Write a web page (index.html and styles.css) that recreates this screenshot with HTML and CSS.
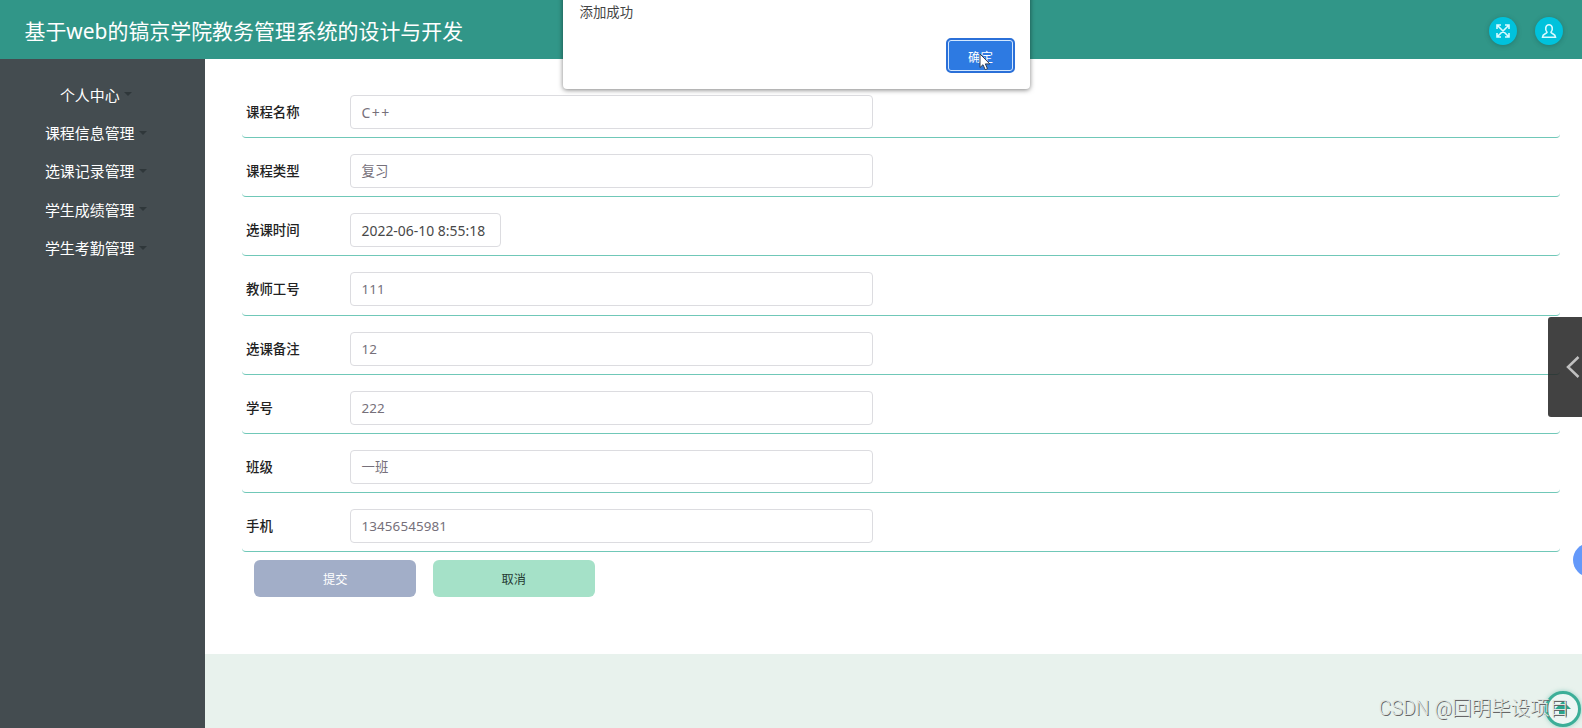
FILE: index.html
```html
<!DOCTYPE html>
<html lang="zh-CN">
<head>
<meta charset="utf-8">
<title>教务管理系统</title>
<link rel="stylesheet" href="styles.css">
</head>
<body>
<header class="header">
  <h1 class="title">基于web的镐京学院教务管理系统的设计与开发</h1>
  <div class="tools">
    <span class="tool"><svg width="14" height="14" viewBox="0 0 14 14" fill="none" stroke="currentColor" stroke-width="1.6"><path d="M1 5V1h4M9 1h4v4M13 9v4H9M5 13H1V9M1.500 1.500l11 11M12.500 1.500l-11 11"/></svg></span>
    <span class="tool"><svg width="16" height="16" viewBox="0 0 16 16" fill="none" stroke="currentColor" stroke-width="1.600"><path d="M6 9.200C3.800 7 4.300 1.700 8 1.700S12.200 7 10 9.200C10.500 11 14.500 10.700 14.500 14.200H1.500C1.500 10.700 5.500 11 6 9.200Z"/></svg></span>
  </div>
</header>
<div class="layout">
  <nav class="sidebar">
    <a class="nav-item">个人中心<i class="caret"></i></a>
    <a class="nav-item">课程信息管理<i class="caret"></i></a>
    <a class="nav-item">选课记录管理<i class="caret"></i></a>
    <a class="nav-item">学生成绩管理<i class="caret"></i></a>
    <a class="nav-item">学生考勤管理<i class="caret"></i></a>
  </nav>
  <main class="main">
    <form class="form">
      <div class="row"><label class="label">课程名称</label><div class="field wide-text">C++</div></div>
      <div class="row"><label class="label">课程类型</label><div class="field">复习</div></div>
      <div class="row"><label class="label">选课时间</label><div class="field date">2022-06-10 8:55:18</div></div>
      <div class="row"><label class="label">教师工号</label><div class="field">111</div></div>
      <div class="row"><label class="label">选课备注</label><div class="field">12</div></div>
      <div class="row"><label class="label">学号</label><div class="field">222</div></div>
      <div class="row"><label class="label">班级</label><div class="field">一班</div></div>
      <div class="row"><label class="label">手机</label><div class="field">13456545981</div></div>
      <div class="actions">
        <button type="button" class="btn submit">提交</button>
        <button type="button" class="btn cancel">取消</button>
      </div>
    </form>
  </main>
</div>
<div class="dialog">
  <p class="message">添加成功</p>
  <button type="button" class="confirm">确定</button>
  <svg class="cursor" width="12" height="18" viewBox="0 0 12 18"><path d="M1 1v13.500l3-2.800 2.200 5 2.300-1-2.200-4.800h4.500Z" fill="#fff" stroke="#333c50" stroke-width="1"/></svg>
</div>
<div class="drawer"><svg width="14" height="22" viewBox="0 0 14 22" fill="none" stroke="#c0c0c0" stroke-width="2.500"><path d="M12.500 1 2 11l10.500 10"/></svg></div>
<div class="bubble"></div>
<div class="totop"><svg width="18" height="18" viewBox="0 0 18 18"><path d="M9 1l8 8h-4v7H5V9H1Z" fill="#2ba58c"/></svg></div>
<div class="watermark">CSDN @回明毕设项目</div>
</body>
</html>
```
FILE: styles.css
```css
* { box-sizing: border-box; }
body {
  margin: 0;
  height: 728px;
  overflow: hidden;
  position: relative;
  display: flex;
  flex-direction: column;
  font-family: "Noto Sans", "Noto Sans CJK SC", sans-serif;
  font-size: 13.400px;
  background: #e8f2ed;
}
.header {
  height: 58.500px;
  flex: none;
  display: flex;
  align-items: center;
  justify-content: space-between;
  padding: 3px 19px 0 24.500px;
  background: #319688;
  color: #fff;
}
.title { margin: 0; font-size: 20.930px; font-weight: 400; line-height: 30px; white-space: nowrap; }
.tools { display: flex; gap: 18px; }
.tool {
  width: 28px;
  height: 28px;
  border-radius: 50%;
  background: #00c2dc;
  color: #d8faff;
  display: flex;
  align-items: center;
  justify-content: center;
  box-shadow: 0 1px 5px rgba(0, 60, 60, .3);
}
.layout { flex: 1; display: flex; min-height: 0; }
.sidebar {
  width: 204.500px;
  flex: none;
  padding: 16.500px 25px 0 0;
  background: #444c50;
  display: flex;
  flex-direction: column;
}
.nav-item {
  height: 38.400px;
  display: flex;
  align-items: center;
  justify-content: center;
  font-size: 14.950px;
  color: #fff;
}
.caret {
  width: 0;
  margin: 0 -12px 0 4px;
  border: 4px solid transparent;
  border-top-color: #2f373a;
  border-bottom: 0;
}
.main { flex: 1; height: 595.500px; background: #fff; padding: 20.500px 22px 0 37.500px; }
.row {
  height: 59.150px;
  padding: 16px 0 0 4px;
  display: flex;
  align-items: flex-start;
  border-bottom: 1px solid #70c8b8;
  border-radius: 4px;
}
.label { width: 104px; line-height: 35px; font-weight: 500; color: #222; }
.field {
  width: 523px;
  height: 34px;
  padding: 0 10.500px;
  border: 1px solid #dcdce0;
  border-radius: 4px;
  line-height: 33px;
  letter-spacing: .12px;
  color: #76707a;
}
.wide-text { font-size: 14px; letter-spacing: 1.500px; }
.date { width: 151px; font-size: 13.900px; letter-spacing: .020px; color: #484848; white-space: nowrap; }
.actions { display: flex; gap: 16.500px; padding: 8px 0 0 12.300px; }
.btn {
  width: 162px;
  height: 37px;
  padding: 0;
  border: 0;
  border-radius: 6px;
  font-family: inherit;
  font-size: 12.200px;
}
.submit { background: #a2aec8; color: #fff; }
.cancel { background: #a5e1c8; color: #243a32; }
.dialog {
  position: absolute;
  top: -10px;
  left: 563px;
  width: 467px;
  height: 99px;
  padding: 12px 15px 16px 16.500px;
  display: flex;
  flex-direction: column;
  justify-content: space-between;
  background: #fff;
  border-radius: 4px;
  box-shadow: 0 1px 5px rgba(0, 0, 0, .5);
}
.message { margin: 0; line-height: 20px; color: #444; }
.confirm {
  align-self: flex-end;
  width: 69px;
  height: 35px;
  padding: 1px 0 0;
  border: 2px solid #2b70d8;
  border-radius: 5px;
  background: #2d7ae2;
  box-shadow: inset 0 0 0 1px #d4e8ff;
  color: #fff;
  font-family: inherit;
  font-size: 12.500px;
}
.cursor { position: absolute; left: 416px; top: 63px; }
.drawer {
  position: absolute;
  right: 0;
  top: 317px;
  width: 34px;
  height: 100px;
  padding-right: 2px;
  border-radius: 3px 0 0 3px;
  background: rgba(38, 38, 38, .87);
  display: flex;
  align-items: center;
  justify-content: flex-end;
}
.bubble {
  position: absolute;
  left: 1572.500px;
  top: 543px;
  width: 34px;
  height: 34px;
  border-radius: 50%;
  background: #6499fa;
}
.totop {
  position: absolute;
  left: 1544.500px;
  top: 690.500px;
  width: 36px;
  height: 36px;
  border: 3px solid #3cae98;
  border-radius: 50%;
  background: #eef6f4;
  box-shadow: 0 0 4px rgba(60, 174, 152, .5);
  display: flex;
  align-items: center;
  justify-content: center;
}
.watermark {
  position: absolute;
  right: 13px;
  top: 694px;
  font-family: Roboto, "Noto Sans CJK SC", sans-serif;
  font-weight: 300;
  font-size: 19.500px;
  line-height: 30px;
  white-space: nowrap;
  color: #dfe5e2;
  text-shadow: 1px 1px 0 #666;
}
```
